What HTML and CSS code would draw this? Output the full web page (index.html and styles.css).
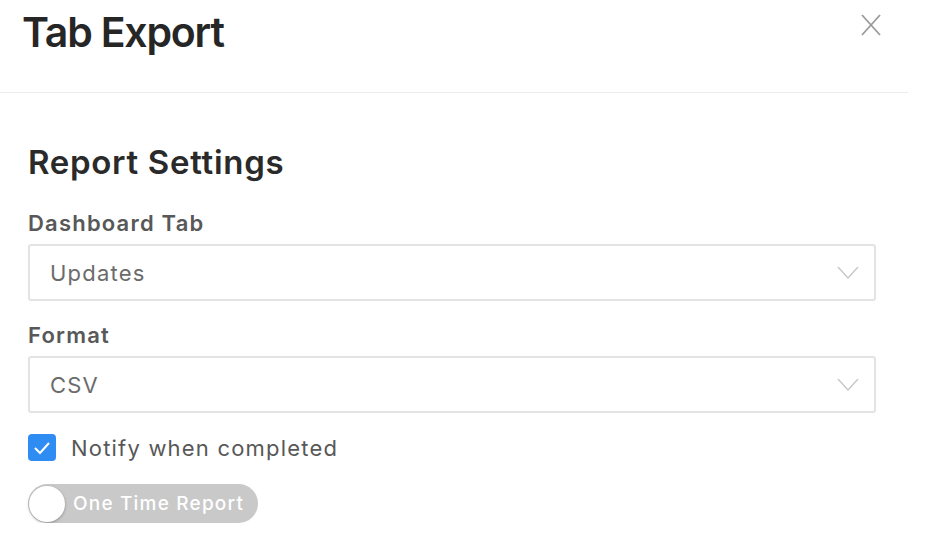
FILE: index.html
```html
<!DOCTYPE html>
<html lang="en">
<head>
  <meta charset="UTF-8">
  <title>Tab Export</title>
  <link rel="stylesheet" href="styles.css">
</head>
<body>
  <div id="exportDialog">
    <div class="dialog-header">
      <h1 class="dialog-title">Tab Export</h1>
      <button class="close-btn" aria-label="Close">
        <svg width="20" height="22" viewBox="0 0 20 22">
          <line x1="1" y1="1" x2="19" y2="21" stroke="#9a9a9a" stroke-width="1.8"/>
          <line x1="19" y1="1" x2="1" y2="21" stroke="#9a9a9a" stroke-width="1.8"/>
        </svg>
      </button>
    </div>

    <div class="dialog-body">
      <h2 class="section-title">Report Settings</h2>

      <label class="field-label label-first">Dashboard Tab</label>
      <div class="select-box">
        <span class="select-value">Updates</span>
        <svg class="chevron" width="22" height="13" viewBox="0 0 22 13">
          <polyline points="1,1 11,12 21,1" fill="none" stroke="#c9c9c9" stroke-width="1.5"/>
        </svg>
      </div>

      <label class="field-label">Format</label>
      <div class="select-box">
        <span class="select-value">CSV</span>
        <svg class="chevron" width="22" height="13" viewBox="0 0 22 13">
          <polyline points="1,1 11,12 21,1" fill="none" stroke="#c9c9c9" stroke-width="1.5"/>
        </svg>
      </div>

      <div class="check-row">
        <span class="checkbox">
          <svg width="18" height="14" viewBox="0 0 18 14">
            <polyline points="2,7 7,12 16,2" fill="none" stroke="#fff" stroke-width="2"/>
          </svg>
        </span>
        <span class="check-text">Notify when completed</span>
      </div>

      <div class="toggle">
        <span class="toggle-knob"></span>
        <span class="toggle-text">One Time Report</span>
      </div>
    </div>
  </div>
</body>
</html>
```

FILE: styles.css
```css
body {
  font-family: 'Inter', 'Liberation Sans', sans-serif;
  background-color: #fff;
  margin: 0;
  padding: 0;
}

#exportDialog {
  width: 908px;
}

.dialog-header {
  display: flex;
  justify-content: space-between;
  align-items: flex-start;
  height: 92px;
  padding: 0 27px 0 22px;
  border-bottom: 1px solid #ececec;
}

.dialog-title {
  margin: 12px 0 0 0;
  font-size: 41px;
  line-height: 41px;
  font-weight: 600;
  letter-spacing: -1.2px;
  color: #262626;
}

.close-btn {
  background: none;
  border: none;
  padding: 0;
  margin-top: 14px;
  cursor: pointer;
}

.dialog-body {
  display: flex;
  flex-direction: column;
  align-items: flex-start;
  padding: 0 32px 0 28px;
}

.section-title {
  margin: 53px 0 0 0;
  font-size: 33px;
  line-height: 33px;
  font-weight: 600;
  letter-spacing: 0.7px;
  color: #2a2a2a;
}

.field-label {
  font-size: 22px;
  line-height: 22px;
  font-weight: 600;
  letter-spacing: 1.2px;
  color: #585858;
  margin-top: 23px;
  margin-bottom: 10px;
}

.label-first {
  margin-top: 33px;
}

.select-box {
  width: 848px;
  height: 57px;
  box-sizing: border-box;
  border: 2px solid #e3e3e3;
  border-radius: 3px;
  display: flex;
  align-items: center;
  justify-content: space-between;
  padding: 0 15px 0 20px;
}

.select-value {
  font-size: 22px;
  letter-spacing: 1.2px;
  color: #6b6b6b;
}

.check-row {
  display: flex;
  align-items: center;
  margin-top: 21px;
}

.checkbox {
  width: 28px;
  height: 27px;
  border-radius: 4px;
  background-color: #2f8cf3;
  display: flex;
  align-items: center;
  justify-content: center;
}

.check-text {
  margin-left: 15px;
  font-size: 22px;
  letter-spacing: 1.2px;
  color: #585858;
}

.toggle {
  display: flex;
  align-items: center;
  gap: 8px;
  margin-top: 23px;
  width: 230px;
  height: 39px;
  box-sizing: border-box;
  padding: 0 1px;
  border-radius: 20px;
  background-color: #c9c9c9;
}

.toggle-knob {
  width: 36px;
  height: 36px;
  border-radius: 50%;
  background-color: #fff;
  box-shadow: 0 1px 3px rgba(0, 0, 0, 0.3);
}

.toggle-text {
  font-size: 19px;
  font-weight: 500;
  letter-spacing: 1.2px;
  color: #fff;
}
```
